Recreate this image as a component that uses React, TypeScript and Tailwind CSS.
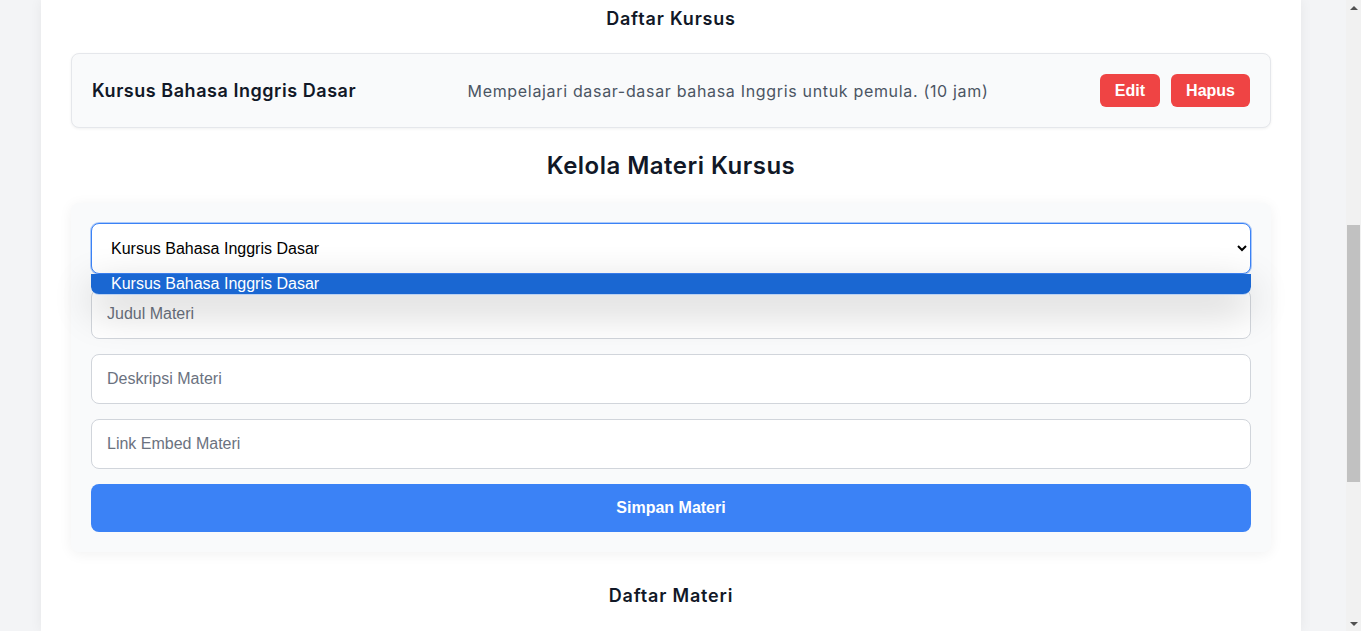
import { useState } from 'react'

const heading = { fontFamily: 'Inter, "Noto Sans", sans-serif' }
const plain = { fontFamily: '"Liberation Sans", Arial, sans-serif' }

interface Course {
  id: number
  title: string
  description: string
  hours: number
}

function Scrollbar() {
  return (
    <div className="w-[15px] h-full bg-[#f1f1f1] flex flex-col items-center shrink-0">
      <div className="h-[15px] flex items-center justify-center">
        <div className="w-0 h-0 border-x-[4px] border-x-transparent border-b-[4px] border-b-[#505050]" />
      </div>
      <div className="flex-1 w-full flex flex-col px-px">
        <div className="h-[210px]" />
        <div className="h-[257px] bg-[#c1c1c1]" />
      </div>
      <div className="h-[15px] flex items-center justify-center">
        <div className="w-0 h-0 border-x-[4px] border-x-transparent border-t-[4px] border-t-[#505050]" />
      </div>
    </div>
  )
}

export default function App() {
  const [courses] = useState<Course[]>([
    {
      id: 1,
      title: 'Kursus Bahasa Inggris Dasar',
      description: 'Mempelajari dasar-dasar bahasa Inggris untuk pemula.',
      hours: 10
    }
  ])
  const [selected, setSelected] = useState('1')

  return (
    <div className="h-[631px] w-full flex bg-[#f3f4f6] overflow-hidden">
      <div className="flex-1 flex">
        <div className="ml-[41px] w-[1260px] h-full bg-white shadow-[0_0_12px_rgba(0,0,0,0.06)] px-[30px] pt-[5px]">
          <h2
            className="text-lg leading-7 font-semibold text-[#111827] text-center mb-5 tracking-[0.045em]"
            style={heading}
          >
            Daftar Kursus
          </h2>

          {courses.map((course) => (
            <div
              key={course.id}
              className="flex items-center justify-between px-5 h-[75px] bg-[#f9fafb] border border-[#e5e7eb] rounded-lg shadow-[0_1px_3px_rgba(0,0,0,0.06)]"
            >
              <h3 className="text-lg font-semibold text-[#111827] tracking-[0.03em]" style={heading}>
                {course.title}
              </h3>
              <p className="text-base text-[#4b5563] tracking-[0.042em]" style={heading}>
                {course.description} ({course.hours} jam)
              </p>
              <div className="flex gap-[11px]">
                <button className="h-[33px] px-[15px] bg-[#ef4444] text-white font-bold rounded-md" style={plain}>
                  Edit
                </button>
                <button className="h-[33px] px-[15px] bg-[#ef4444] text-white font-bold rounded-md" style={plain}>
                  Hapus
                </button>
              </div>
            </div>
          ))}

          <h2
            className="text-2xl leading-8 font-semibold text-[#111827] text-center mt-[22px] mb-[21px] tracking-[0.02em]"
            style={heading}
          >
            Kelola Materi Kursus
          </h2>

          <div className="p-5 bg-[#f9fafb] rounded-lg shadow-[0_2px_14px_rgba(0,0,0,0.06)]">
            <div className="relative">
              <select
                value={selected}
                onChange={(event) => setSelected(event.target.value)}
                className="w-full h-[51px] pl-[15px] pr-4 bg-white text-black text-base border border-[#3b82f6] rounded-lg outline-none ring-1 ring-[#3b82f6]/40"
                style={plain}
              >
                {courses.map((course) => (
                  <option key={course.id} value={String(course.id)}>
                    {course.title}
                  </option>
                ))}
              </select>
              <div className="absolute left-0 right-0 top-[51px] z-10 shadow-[0_14px_40px_rgba(0,0,0,0.24)] rounded-b-lg">
                <div
                  className="h-[21px] flex items-center pl-5 bg-[#1a67d2] text-white text-base rounded-b-lg border-b border-white/70"
                  style={plain}
                >
                  Kursus Bahasa Inggris Dasar
                </div>
              </div>
            </div>

            <div className="flex flex-col gap-[15px] mt-[15px]">
              <input
                type="text"
                placeholder="Judul Materi"
                className="h-[50px] px-[15px] bg-white border border-[#d1d5db] rounded-lg text-base placeholder:text-[#6b7280]"
                style={plain}
              />
              <input
                type="text"
                placeholder="Deskripsi Materi"
                className="h-[50px] px-[15px] bg-white border border-[#d1d5db] rounded-lg text-base placeholder:text-[#6b7280]"
                style={plain}
              />
              <input
                type="text"
                placeholder="Link Embed Materi"
                className="h-[50px] px-[15px] bg-white border border-[#d1d5db] rounded-lg text-base placeholder:text-[#6b7280]"
                style={plain}
              />
              <button className="h-12 bg-[#3b82f6] text-white font-bold rounded-lg" style={plain}>
                Simpan Materi
              </button>
            </div>
          </div>

          <h2
            className="text-lg leading-7 font-semibold text-[#111827] text-center mt-[30px] tracking-[0.045em]"
            style={heading}
          >
            Daftar Materi
          </h2>
        </div>
      </div>
      <Scrollbar />
    </div>
  )
}
